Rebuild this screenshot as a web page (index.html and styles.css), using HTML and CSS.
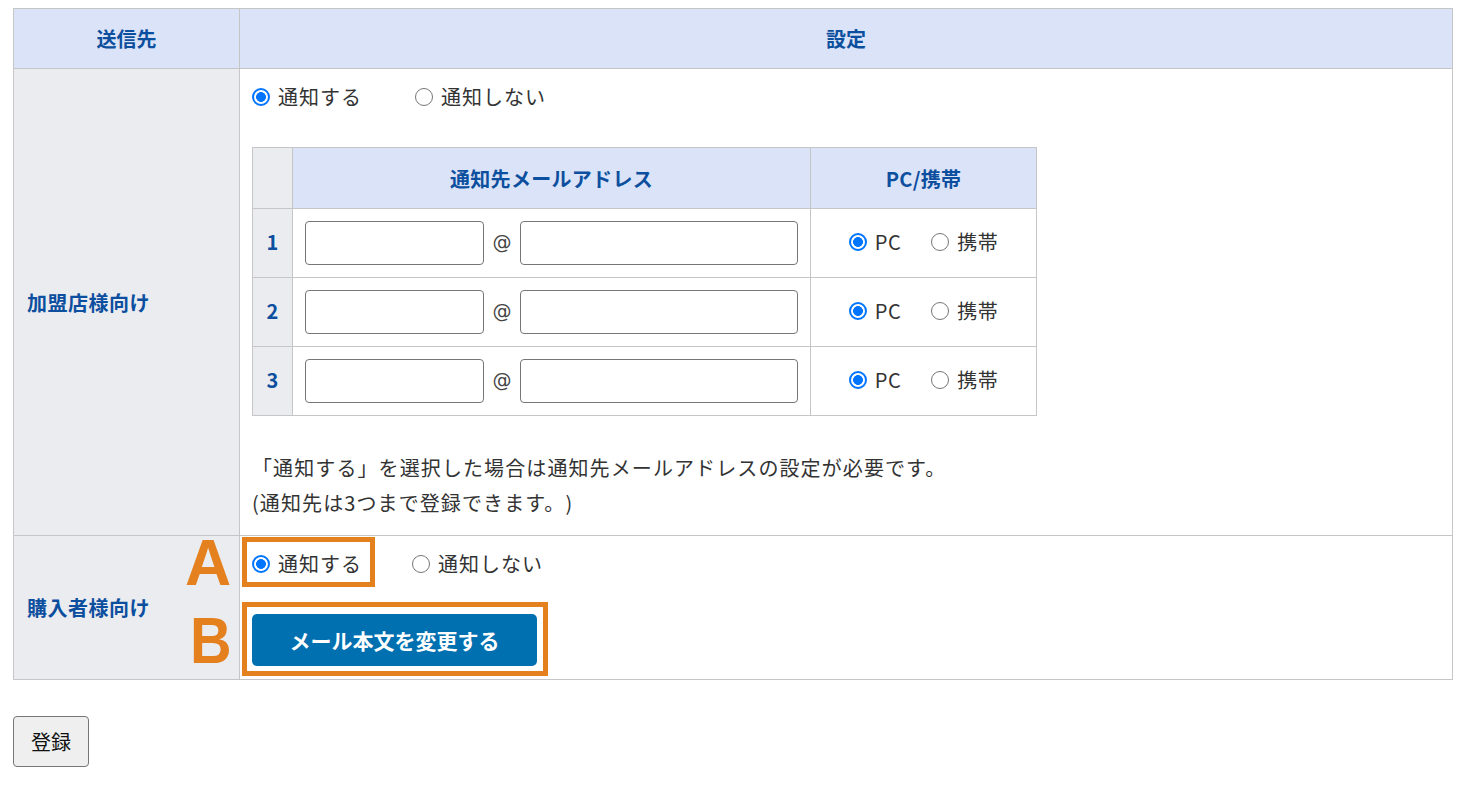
FILE: index.html
```html
<!DOCTYPE html>
<html lang="ja">
<head>
<meta charset="utf-8">
<title>通知設定</title>
<link rel="stylesheet" href="styles.css">
</head>
<body>
<table class="main">
  <colgroup><col class="c-left"><col class="c-right"></colgroup>
  <thead>
    <tr><th>送信先</th><th>設定</th></tr>
  </thead>
  <tbody>
    <tr>
      <th class="side">加盟店様向け</th>
      <td class="cell cell-shop">
        <div class="radios">
          <label class="opt opt-wide"><input type="radio" class="rd" name="shop" checked><span>通知する</span></label>
          <label class="opt"><input type="radio" class="rd" name="shop"><span>通知しない</span></label>
        </div>
        <table class="mail">
          <colgroup><col class="m-no"><col class="m-addr"><col class="m-type"></colgroup>
          <thead>
            <tr><th></th><th>通知先メールアドレス</th><th>PC/携帯</th></tr>
          </thead>
          <tbody>
            <tr>
              <th class="no">1</th>
              <td class="addr"><div class="addr-in"><input class="tx tx1" type="text"><span class="at">@</span><input class="tx tx2" type="text"></div></td>
              <td class="type"><div class="types"><label class="opt"><input type="radio" class="rd" name="t1" checked><span>PC</span></label><label class="opt"><input type="radio" class="rd" name="t1"><span>携帯</span></label></div></td>
            </tr>
            <tr>
              <th class="no">2</th>
              <td class="addr"><div class="addr-in"><input class="tx tx1" type="text"><span class="at">@</span><input class="tx tx2" type="text"></div></td>
              <td class="type"><div class="types"><label class="opt"><input type="radio" class="rd" name="t2" checked><span>PC</span></label><label class="opt"><input type="radio" class="rd" name="t2"><span>携帯</span></label></div></td>
            </tr>
            <tr>
              <th class="no">3</th>
              <td class="addr"><div class="addr-in"><input class="tx tx1" type="text"><span class="at">@</span><input class="tx tx2" type="text"></div></td>
              <td class="type"><div class="types"><label class="opt"><input type="radio" class="rd" name="t3" checked><span>PC</span></label><label class="opt"><input type="radio" class="rd" name="t3"><span>携帯</span></label></div></td>
            </tr>
          </tbody>
        </table>
        <p class="note">「通知する」を選択した場合は通知先メールアドレスの設定が必要です。<br>(通知先は3つまで登録できます。)</p>
      </td>
    </tr>
    <tr>
      <th class="side">購入者様向け</th>
      <td class="cell cell-buyer">
        <div class="radios">
          <label class="opt opt-wide2"><input type="radio" class="rd" name="buyer" checked><span>通知する</span></label>
          <label class="opt"><input type="radio" class="rd" name="buyer"><span>通知しない</span></label>
        </div>
        <button class="btn-mail" type="button">メール本文を変更する</button>
        <span class="mark mark-a">A</span>
        <span class="mark mark-b">B</span>
        <span class="box box-a"></span>
        <span class="box box-b"></span>
      </td>
    </tr>
  </tbody>
</table>
<button class="btn-submit" type="button">登録</button>
</body>
</html>
```
FILE: styles.css
```css
html, body {
  margin: 0;
  padding: 0;
  background: #fff;
}
body {
  padding: 8px 13px;
  font-family: "Noto Sans CJK JP", "Noto Sans", sans-serif;
  font-size: 20px;
  color: #333;
  text-spacing-trim: space-all;
}
.main {
  border-collapse: collapse;
  width: 1440px;
  table-layout: fixed;
}
.c-left { width: 226px; }
.main th, .main td {
  border: 1px solid #c6c6c6;
}
.main > thead th {
  height: 59px;
  padding: 0;
  background: #dae3f7;
  color: #0d4f9f;
  font-weight: 700;
  text-align: center;
  line-height: 1;
}
.side {
  background: #ebecf0;
  color: #0d4f9f;
  font-weight: 700;
  text-align: left;
  padding: 0 13px;
  vertical-align: middle;
  letter-spacing: 0.5px;
}
.cell {
  vertical-align: top;
  padding: 12px 12px 15px;
}
.cell-buyer {
  position: relative;
  padding-bottom: 13px;
}
.radios {
  display: flex;
  align-items: center;
  height: 32px;
}
.opt {
  display: inline-flex;
  align-items: center;
  gap: 8px;
  line-height: 1;
}
.opt span {
  letter-spacing: 1px;
}
.opt-wide { margin-right: 53px; }
.opt-wide2 { margin-right: 50px; }
.rd {
  appearance: none;
  -webkit-appearance: none;
  box-sizing: border-box;
  width: 18px;
  height: 18px;
  margin: 0;
  border: 1.5px solid #767676;
  border-radius: 50%;
  background: #fff;
}
.rd:checked {
  border: 2px solid #0075ff;
  background: radial-gradient(circle, #0075ff 0 4.6px, #fff 5.2px);
}
.mail {
  border-collapse: collapse;
  table-layout: fixed;
  width: 784px;
  margin-top: 34px;
}
.m-no { width: 40px; }
.m-addr { width: 518px; }
.m-type { width: 226px; }
.mail th, .mail td {
  border: 1px solid #c6c6c6;
}
.mail thead th {
  height: 60px;
  padding: 0;
  background: #dae3f7;
  color: #0d4f9f;
  font-weight: 700;
  text-align: center;
  letter-spacing: 0.3px;
}
.mail thead th:first-child {
  background: #ebecf0;
}
.no {
  background: #ebecf0;
  color: #0d4f9f;
  font-weight: 700;
  text-align: center;
  padding: 0 0 3px;
}
.addr {
  padding: 12px 12px;
}
.addr-in {
  display: flex;
  align-items: center;
  gap: 8px;
}
.tx {
  box-sizing: border-box;
  height: 44px;
  border: 1px solid #767676;
  border-radius: 4px;
  background: #fff;
  margin: 0;
  padding: 0 8px;
  font: inherit;
}
.tx1 { width: 179px; }
.tx2 { width: 279px; }
.at {
  width: 20px;
  text-align: center;
  color: #444;
  font-family: "DejaVu Sans", sans-serif;
  font-size: 19px;
  margin-top: -2px;
}
.type {
  padding: 0 0 3px;
  text-align: center;
}
.types {
  display: flex;
  justify-content: center;
  align-items: center;
  gap: 30px;
}
.types .opt span { letter-spacing: 0.5px; }
.note {
  margin: 34px 0 0;
  line-height: 35px;
  letter-spacing: 1.1px;
}
.btn-mail {
  display: block;
  margin-top: 34px;
  width: 285px;
  height: 52px;
  border: 0;
  border-radius: 5px;
  background: #0070b0;
  color: #fff;
  font: inherit;
  font-size: 21px;
  font-weight: 700;
  padding: 0;
}
.mark {
  position: absolute;
  font-family: "Liberation Sans", Arial, sans-serif;
  font-weight: 700;
  font-size: 64px;
  line-height: 64px;
  color: #e5801f;
}
.mark-a { left: -55px; top: -5px; }
.mark-b { left: -50px; top: 73px; transform: scaleX(0.9); transform-origin: left center; }
.box {
  position: absolute;
  box-sizing: border-box;
  border: 5px solid #e5801f;
}
.box-a { left: 2px; top: 1px; width: 133px; height: 50px; }
.box-b { left: 2px; top: 66px; width: 306px; height: 74px; }
.btn-submit {
  display: block;
  margin-top: 36px;
  width: 76px;
  height: 51px;
  border: 1px solid #767676;
  border-radius: 4px;
  background: #efefef;
  color: #111;
  font: inherit;
  padding: 0;
}
```
